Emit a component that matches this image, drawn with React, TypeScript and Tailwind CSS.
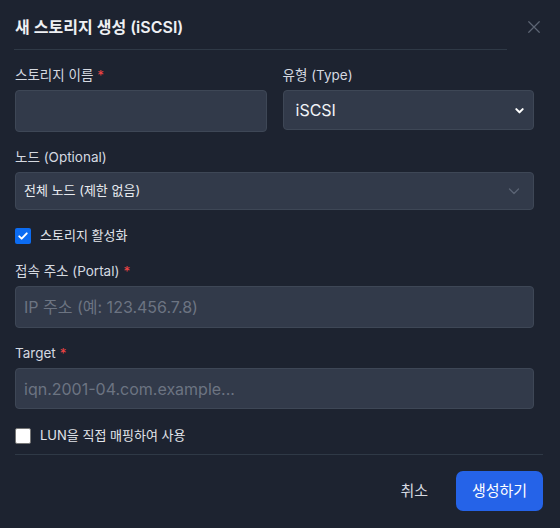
import { useState } from "react";

const font = { fontFamily: "Inter, 'Noto Sans CJK KR', sans-serif" };

function Label({ text, required }: { text: string; required?: boolean }) {
  return (
    <label className="mb-[6px] block text-[13.5px] leading-[18px] text-[#d5d9e0]">
      {text}
      {required && <span className="ml-1 text-[#ef4444]">*</span>}
    </label>
  );
}

function Check({ checked, label }: { checked: boolean; label: string }) {
  return (
    <div className="flex h-4 items-center gap-[9px]">
      {checked ? (
        <span className="flex h-4 w-4 items-center justify-center rounded-[2px] bg-[#0c6cf2]">
          <svg viewBox="0 0 16 16" className="h-3 w-3" fill="none" stroke="white" strokeWidth="2.6" strokeLinecap="round" strokeLinejoin="round">
            <path d="M3 8.5l3.2 3L13 4.5" />
          </svg>
        </span>
      ) : (
        <span className="h-4 w-4 rounded-[2px] border border-[#767676] bg-white" />
      )}
      <span className="text-[13px] text-[#e2e5ea]">{label}</span>
    </div>
  );
}

export default function App() {
  const [name, setName] = useState("");

  return (
    <div className="h-[528px] w-[560px] overflow-hidden bg-[#1d2330]" style={font}>
      {/* Header */}
      <div className="flex h-[49px] items-center justify-between pl-[15px] pr-[19px] pt-[4px]">
        <h2 className="text-[16px] font-semibold text-[#eef0f3]">새 스토리지 생성 (iSCSI)</h2>
        <svg viewBox="0 0 16 16" className="h-[14px] w-[14px]" fill="none" stroke="#5d6574" strokeWidth="1.4" strokeLinecap="round">
          <path d="M2 2l12 12M14 2L2 14" />
        </svg>
      </div>
      <div className="ml-[14px] h-px w-[493px] bg-[#2f3946]" />

      {/* Body */}
      <div className="pl-[15px] pr-[26px] pt-[16px]">
        <div className="grid grid-cols-2 gap-4">
          <div>
            <Label text="스토리지 이름" required />
            <input
              value={name}
              onChange={(e) => setName(e.target.value)}
              className="h-[42px] w-full rounded-[4px] border border-[#3e4756] bg-[#323a4a] px-[8px] text-[16px] text-white outline-none"
            />
          </div>
          <div>
            <Label text="유형 (Type)" />
            <div className="flex h-[40px] items-center justify-between rounded-[4px] border border-[#3e4756] bg-[#323a4a] pl-[12px] pr-[8px] text-[16px] text-[#f2f4f7]">
              <span>iSCSI</span>
              <svg viewBox="0 0 12 12" className="h-[11px] w-[11px]" fill="none" stroke="white" strokeWidth="2.2" strokeLinecap="round" strokeLinejoin="round">
                <path d="M2.5 4.5L6 8l3.5-3.5" />
              </svg>
            </div>
          </div>
        </div>

        <div className="mt-[16px]">
          <Label text="노드 (Optional)" />
          <div className="flex h-[38px] items-center justify-between rounded-[4px] border border-[#3e4756] bg-[#323a4a] pl-[8px] pr-[12px] text-[13px] text-[#e8ebef]">
            <span>전체 노드 (제한 없음)</span>
            <svg viewBox="0 0 14 14" className="h-[14px] w-[14px]" fill="none" stroke="#5b6474" strokeWidth="1.3" strokeLinecap="round" strokeLinejoin="round">
              <path d="M2.5 5l4.5 4.5L11.5 5" />
            </svg>
          </div>
        </div>

        <div className="mt-[18px]">
          <Check checked label="스토리지 활성화" />
        </div>

        <div className="mt-[18px]">
          <Label text="접속 주소 (Portal)" required />
          <input
            placeholder="IP 주소 (예: 123.456.7.8)"
            className="h-[42px] w-full rounded-[4px] border border-[#3e4756] bg-[#323a4a] px-[8px] text-[16px] text-white outline-none placeholder:text-[#6c7482]"
          />
        </div>

        <div className="mt-[16px]">
          <Label text="Target" required />
          <input
            placeholder="iqn.2001-04.com.example..."
            className="h-[41px] w-full rounded-[4px] border border-[#3e4756] bg-[#323a4a] px-[8px] text-[16px] text-white outline-none placeholder:text-[#6c7482]"
          />
        </div>

        <div className="mt-[19px]">
          <Check checked={false} label="LUN을 직접 매핑하여 사용" />
        </div>
      </div>

      {/* Footer */}
      <div className="ml-[15px] mr-[17px] mt-[10px] h-px bg-[#2f3946]" />
      <div className="flex items-center justify-end gap-[28px] pr-[17px] pt-[16px]">
        <button className="text-[15px] text-[#d5d9e0]">취소</button>
        <button className="h-[40px] w-[87px] rounded-[7px] bg-[#2563e8] text-[15px] text-white">생성하기</button>
      </div>
    </div>
  );
}
